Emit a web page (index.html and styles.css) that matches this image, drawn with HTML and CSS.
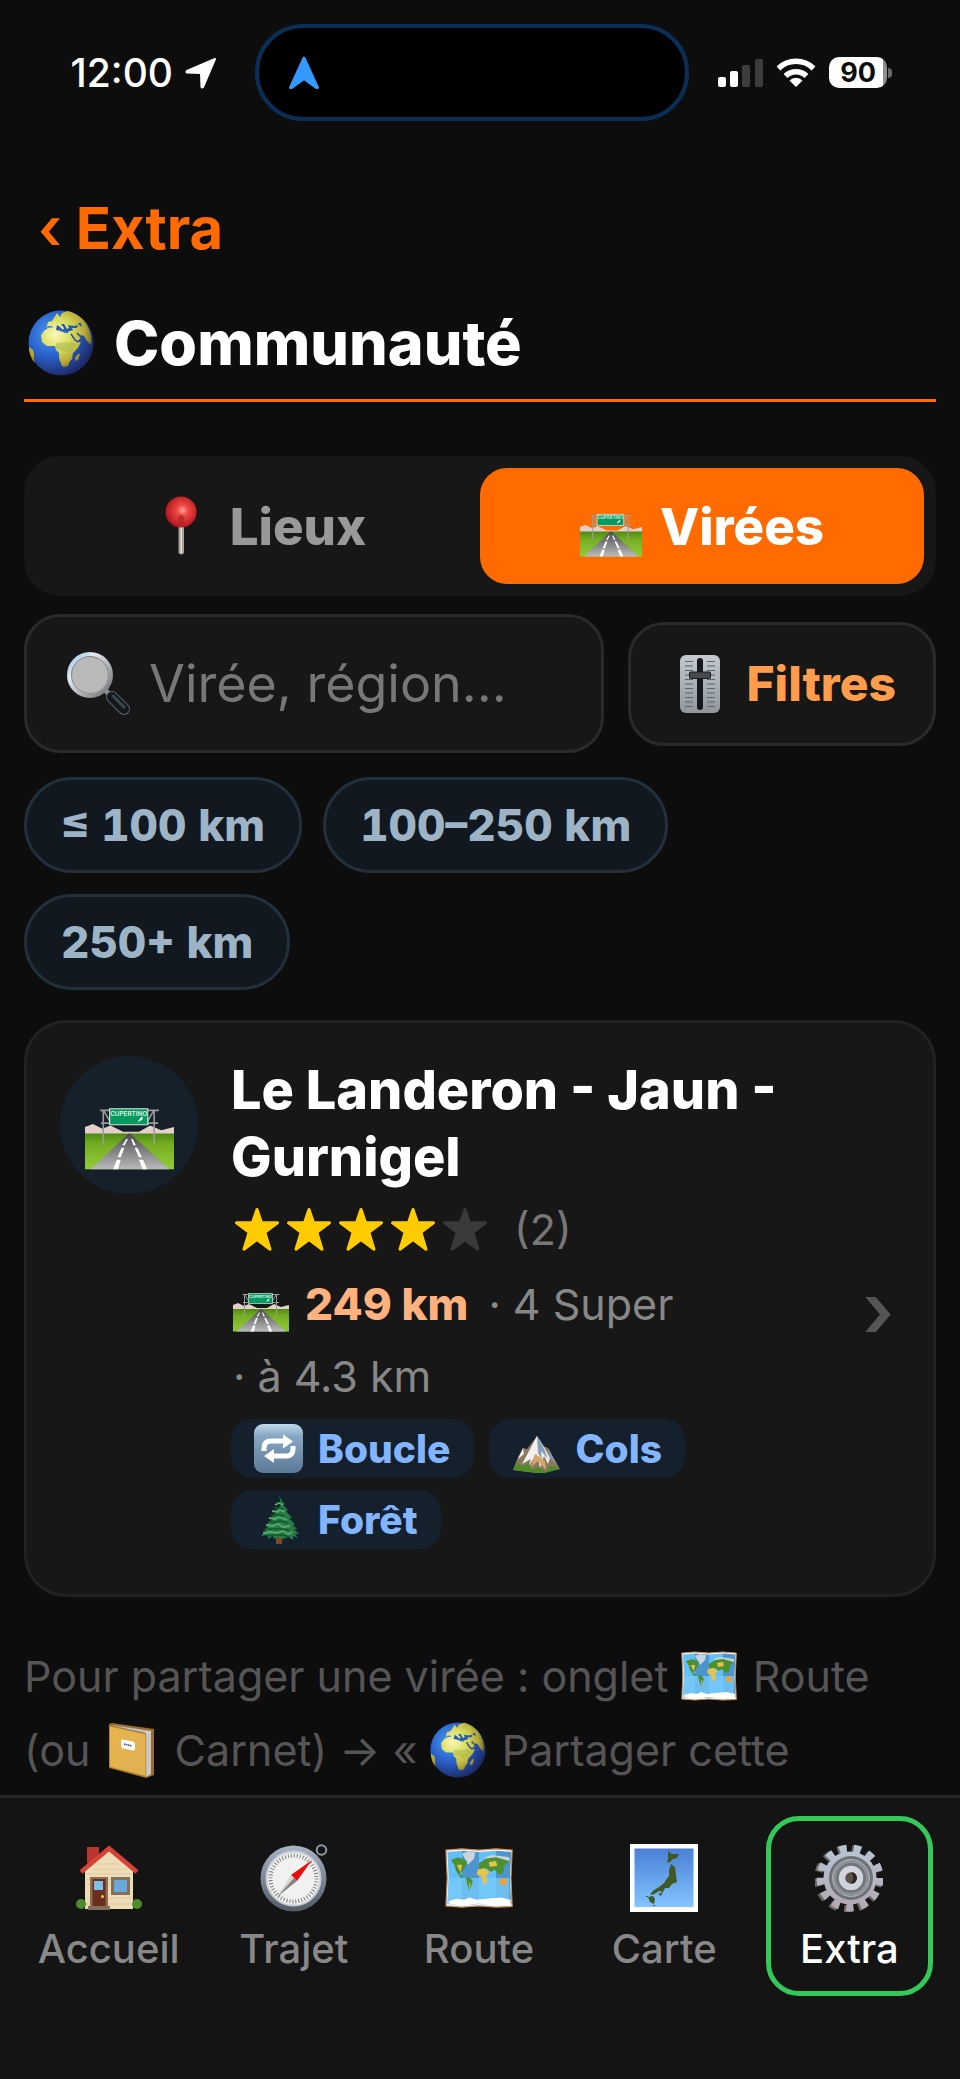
FILE: index.html
```html
<!DOCTYPE html>
<html lang="fr">
<head>
<meta charset="UTF-8">
<meta name="viewport" content="width=device-width, initial-scale=1">
<title>Communauté</title>
<link rel="stylesheet" href="styles.css">
</head>
<body>
<!-- shared icons -->
<svg class="sprite" aria-hidden="true">
<defs>
<radialGradient id="sea" cx="35%" cy="35%" r="70%">
<stop offset="0" stop-color="#4a9df0"/><stop offset=".5" stop-color="#2a62cc"/><stop offset="1" stop-color="#1c2763"/>
</radialGradient>
<radialGradient id="land" gradientUnits="userSpaceOnUse" cx="27" cy="24" r="40">
<stop offset="0" stop-color="#fbf8b4"/><stop offset=".4" stop-color="#d9dc62"/><stop offset=".75" stop-color="#b5a934"/><stop offset="1" stop-color="#5d5b18"/>
</radialGradient>
<linearGradient id="grass" x1="0" y1="0" x2="0" y2="1"><stop offset="0" stop-color="#4e8a12"/><stop offset=".3" stop-color="#74ad22"/><stop offset="1" stop-color="#93cc38"/></linearGradient>
<linearGradient id="asphalt" x1="0" y1="0" x2="0" y2="1"><stop offset="0" stop-color="#4b4b4d"/><stop offset="1" stop-color="#b9babb"/></linearGradient>
<radialGradient id="ball" cx="55%" cy="45%" r="55%"><stop offset="0" stop-color="#ffa79b"/><stop offset=".3" stop-color="#f14b45"/><stop offset="1" stop-color="#b3151d"/></radialGradient>
<linearGradient id="steel" x1="0" y1="0" x2="0" y2="1"><stop offset="0" stop-color="#c3cad0"/><stop offset="1" stop-color="#8f979d"/></linearGradient>
<linearGradient id="rim" x1="0" y1="0" x2="0" y2="1"><stop offset="0" stop-color="#a7b4c6"/><stop offset="1" stop-color="#525b67"/></linearGradient>
<linearGradient id="glass" x1="0" y1="0" x2="1" y2="1"><stop offset="0" stop-color="#8fc0f5"/><stop offset=".3" stop-color="#e4eaf0"/><stop offset="1" stop-color="#6a6a6c"/></linearGradient>
<linearGradient id="sky" x1="0" y1="0" x2="0" y2="1"><stop offset="0" stop-color="#4a80d6"/><stop offset="1" stop-color="#83c4ff"/></linearGradient>
<linearGradient id="key" x1="0" y1="0" x2="0" y2="1"><stop offset="0" stop-color="#c3d9ec"/><stop offset=".25" stop-color="#86a6c3"/><stop offset="1" stop-color="#5d7a98"/></linearGradient>
<linearGradient id="cover" x1="0" y1="0" x2="1" y2="1"><stop offset="0" stop-color="#e8b54a"/><stop offset="1" stop-color="#dfb055"/></linearGradient>
<linearGradient id="gearfill" x1="0" y1="0" x2="0" y2="1"><stop offset="0" stop-color="#b6c4d2"/><stop offset="1" stop-color="#b3a9b3"/></linearGradient>
</defs>
<symbol id="globe" viewBox="0 0 66 66">
<circle cx="33" cy="33" r="32.500" fill="url(#sea)"/>
<path fill="url(#land)" d="M13 25l3-4 4-3 7-1 4 1 1 3 5 2 7 0 2 5 2 4 5 0-3 6-5 5-1 6-2 2-2 5-4 1-2-1-3-8 0-5-3-3-1-4-8 0-5-4zM19 16l1-4 4-1 2-3 3-5 3 4 2-4 6-2c9 2 18 9 21 18 2 5 3 10 2 16l-4-4-3-5-3-1-1 4-5 4-3-2-4-9-5-1-4-2-3 1-4-4-4 0-2 2zM1 37l4 3 1 4 0 6 1 3c-4-4-6-10-6-16zM50 44l2 0-2 6-2 1-1-3z"/>
<path fill="#2557b5" d="M29 15l3 2 3 3 1-2-3-4 3 0 3 5 2-1-1-3 6 1 4-1-1 3-5 0 1 2-6 2-5-1-6-1zM50 13l3 0 1 4-3-2z"/>
<path stroke="#26489e" stroke-width="1.500" fill="none" d="M43 24l4 6 3 2M49 23l4 4"/>
<path fill="#9fb845" opacity=".5" d="M28 33l16-1 4 3-5 6-3 1-12-3z"/>
</symbol>
<symbol id="road" viewBox="0 0 56 56">
<path fill="#e5cfca" d="M0 29l5-2 6 3 5-2 8 4h10l7-4 7 3 8-2v6H0z"/>
<path fill="url(#grass)" d="M0 33h56v22.500H0z"/>
<path fill="url(#asphalt)" d="M27.500 33h1L53 55.500H3.500z"/>
<path fill="#fff" d="M26 36.500l1 0-2 4h-1.500zM23 42h1.800l-2.300 6h-2zM20 49.500h2.500l-1.800 6h-3zM29 36.500h1l2 4h-1.500zM31.200 42h1.700l3 6h-2zM34 49.500h2.500l2.700 6h-3z"/>
<path stroke="#9a9c9c" fill="none" d="M9.500 18.500h37M11.500 18v22M43.500 18v22M10 26.500h36M12 19l4 7M43 19l-4 7"/>
<path fill="#069a60" stroke="#d7e6dd" stroke-width=".7" d="M15.500 17.500h24v10h-24z"/>
<text x="27.500" y="22" font-size="4" text-anchor="middle" fill="#dff5e9" class="sign">CUPERTINO</text>
<path fill="#fff" d="M33 26l2-3 1.500-.3-.5 1.700z"/>
</symbol>
<symbol id="worldmap" viewBox="0 0 56 56">
<path fill="#fff" stroke="#c08a5a" d="M.8 5l13-1 14 1 14-1 13.500 1-1 23 1 23.500-13.500.5-14-1-14 1-13-1 1-23z"/>
<path fill="#63bff5" d="M2 6.500l12-1v45l-12-1 1-21zM28 6.500l14-1v45l-14-1z"/>
<path fill="#4b96cf" d="M14 5.500l14 1v43l-14 1zM42 5.500l12.500 1-1 21 1 22-12.500 1z"/>
<path fill="#78cbfa" d="M3 28h50v21l-11 1-14-1-14 1-12-1z" opacity=".75"/>
<path fill="#c9d3db" d="M14 8l5-2 6 1-1 5-5 5-2-4zM33 11l6-2 14 2v3H33z"/>
<path fill="#4c9130" d="M5 13l6-2 7 3-1 4-3 5-2 1 3 3-2 1-4-6-1-4zM17 27l4 1 2 3-3 7-2-6zM28 16l6-4 8-1 11 3-4 4-1 6-4 1-3-4-3 2-4-3-6 1z"/>
<path fill="#e6c34d" d="M10 17l4 0-1 6-2-3zM20 32l1 1-1 5zM27 21l5-1 5 3-3 3 1 5-3 3-2-7-4-2zM36 15l6-1 1 4-6 1zM45 30l4-1 2 4-5 0z"/>
<path fill="#f2a131" d="M45 29l4-1 2 3-1 3-5-1z"/>
<path fill="#fff" d="M3 47l7-2 6 1 4-2 6 2 8-1 12-1 8 2v4l-12 1-14-2-14 2-11-2z"/>
</symbol>
<symbol id="book" viewBox="0 0 56 56">
<path fill="#9a6c28" d="M6 2l3-1 42 6v46l-8 3L6 46z"/>
<path fill="#d9dbe0" d="M8 3l40 6v43l-5 3V11z"/>
<path stroke="#9c9ea6" stroke-width=".6" d="M45 11v42M47 10v42M12 3.500l34 6M9 4.500l34 6" fill="none"/>
<path fill="url(#cover)" stroke="#b27d28" stroke-width=".8" d="M6.500 4L43 12v42.500L6.500 45z"/>
<path fill="#fff" d="M20 17.500l10 2q2 .5 2 2.500v5q0 2-2 1.500l-10-2q-2-.5-2-2.500v-5q0-2 2-1.500z"/>
<path stroke="#555" stroke-width="1.600" stroke-dasharray="1.500 .5" d="M21 22l8 2"/>
</symbol>
<symbol id="pin" viewBox="0 0 62 62">
<path fill="#aaa09b" d="M28.500 29h5.500v29q-2.700 3-5.500 0z"/>
<path fill="#e4ddd8" d="M30.500 29h1.500v29h-1.500z"/>
<circle cx="31" cy="17" r="15.500" fill="url(#ball)"/>
<path fill="#b2252b" d="M28 22q3-5 6 0v10h-6z" opacity=".7"/>
</symbol>
<symbol id="slider" viewBox="0 0 58 58">
<rect x="9" y="0" width="40" height="58" rx="6" fill="url(#steel)"/>
<path stroke="#5d6468" stroke-width="1.200" d="M14 6.500h8M14 11h8M14 15.500h8M14 20h8M14 24.500h8M14 29h8M14 33.500h8M14 38h8M14 42.500h8M14 47h8M14 51.500h8M36 6.500h8M36 11h8M36 15.500h8M36 20h8M36 24.500h8M36 29h8M36 33.500h8M36 38h8M36 42.500h8M36 47h8M36 51.500h8"/>
<rect x="26" y="3" width="6" height="52" rx="3" fill="#15181d"/>
<rect x="18.500" y="17" width="21" height="6.500" rx="1" fill="#454a4e" stroke="#1a1c1e"/>
</symbol>
<symbol id="magnifier" viewBox="0 0 64 64">
<path stroke="#8d939a" stroke-width="5" d="M38 38l6 6"/>
<path stroke="#5b636b" stroke-width="12" stroke-linecap="round" d="M45 45l12 12"/>
<path stroke="#14181c" stroke-width="10" stroke-linecap="round" d="M45 45l12 12"/>
<path stroke="#3d464e" stroke-width="3" stroke-linecap="round" d="M46 44l11 11"/>
<circle cx="23" cy="23" r="21" fill="#b9b9b9" stroke="url(#glass)" stroke-width="4"/>
<circle cx="23" cy="23" r="18.500" fill="none" stroke="#8a8a8c"/>
</symbol>
<symbol id="loop" viewBox="0 0 49 49">
<rect width="49" height="49" rx="9" fill="url(#key)"/>
<path fill="none" stroke="#fff" stroke-width="5" d="M10 27v-3q0-7 7-7h14M39 22v3q0 7-7 7H18"/>
<path fill="#fff" d="M29 10.500l10 7-10 7zM20 25l-10 7 10 7z"/>
</symbol>
<symbol id="mountain" viewBox="0 0 49 49">
<path fill="#8b7860" d="M1 46l5-13 5-9 4 1L25 12l6 10 5 2 6 11 6 10-15 3-8 1z"/>
<path fill="#f1f0ec" d="M25 12l-8 15-7 13 9-5-3 9 8-14 2 4 2 10 4-12 4 8 2-6-7-13zM11 24l-5 11 6-5z"/>
<path fill="#869eb8" d="M25 12l6 10 5 13-7-8 1 8-4-6zM36 24l6 11 3 5-7-6z"/>
<path fill="#d6a66a" d="M23 30l-4 13 7-6 8 9-1-9-5-4z"/>
<path fill="#4e8b27" d="M1 46l4-7 6 3 6-3 2 7 7-3 8 5 4-7 10 4-15 4-9 0z"/>
</symbol>
<symbol id="tree" viewBox="0 0 49 49">
<path fill="#7b4b2b" d="M22 41h6v8h-6z"/>
<path fill="#277a46" d="M25 0l3 6 3 3-2 1 5 5-2 1 6 7-3 0 6 6-2 1 4 4-3 0 5 5-4 0 3 4-5-2 0 4-5-3-5 2-4-2-5 2-1-3-5 3 0-4-7 1 5-5-2-1 6-5-3-1 6-5-2-1 6-6-2-1 6-6z"/>
<path stroke="#52ad68" stroke-width="1.800" fill="none" d="M21 10l4-2 4 2M18 16l5 1 3-2 5 2M15 23l6 1 4-2 8 3M12 30l7 1 5-2 5 3 7-1M9 38l8-1 6 1 6-2 5 3 5-2"/>
<path stroke="#145631" stroke-width="1.400" fill="none" d="M20 13l5 0 4 1M17 20l6 0 7 1M14 27l7 0 6-1 7 2M11 34l8 0 7 0 9 1M13 41l8-1 7 0 8 2"/>
</symbol>
<symbol id="house" viewBox="0 0 68 68">
<path fill="#b8362d" d="M12 3h12v16H12z"/>
<path fill="#eeddb6" d="M10 65V26L34 5l24 21v39z"/>
<path stroke="#d9c69c" stroke-width=".8" d="M22 20h24M17 25h35M11 30h46M11 35h46M11 40h46M11 54h46M11 60h46"/>
<path fill="#2b2624" d="M34 1l29 25-3 1L34 5z"/>
<path fill="none" stroke="#d64138" stroke-width="4.500" d="M6 28L34 4.500 62 28"/>
<path fill="#8a6f52" d="M15 33h18v30H15z"/>
<path fill="#6b2d1c" d="M17.500 35h13v28h-13z"/>
<path fill="#7fc0ea" d="M19 37h9v9h-9z"/>
<circle cx="27.500" cy="52.500" r="1.500" fill="#f2c84b"/>
<path fill="#81705a" d="M36 33h19v18H36zM13 62h22v4H13z"/>
<path fill="#69a9da" d="M39 36h13v12H39z"/>
<circle cx="6" cy="60" r="5" fill="#4f8a2c"/><circle cx="62" cy="60" r="5" fill="#4f8a2c"/>
</symbol>
<symbol id="compass" viewBox="0 0 68 68">
<circle cx="61.500" cy="6" r="4.800" fill="none" stroke="#8f9aa9" stroke-width="2"/>
<circle cx="33.500" cy="34.500" r="33" fill="url(#rim)"/>
<circle cx="33.500" cy="34.500" r="27" fill="#f1f1f1" stroke="#c9cdd1" stroke-width="2"/>
<circle cx="33.500" cy="34.500" r="23" fill="none" stroke="#808080" stroke-width="4" stroke-dasharray="1 2"/>
<path fill="#e8100f" d="M52 16L31 31l6 6z"/>
<path fill="#d5d5d3" d="M17 53l14-22 3 3z"/>
<path fill="#86837e" d="M17 53l20-16-3-3z"/>
</symbol>
<symbol id="japan" viewBox="0 0 68 68">
<path fill="#fff" d="M0 0h68v68H0z"/>
<path fill="url(#sky)" d="M4.500 4.500h59v58.500h-59z"/>
<path fill="#3f5a26" d="M38 7l4 3 7 0-2 4-4 1-3 3-3 1 1-5zM41 20l4 3 1 8 1 7-5 2-3 4-4 0-2 4-4-1-3 2-4 2-2-1 4-4 5-3 5-4 2-3 3-4 0-6zM28 50l5-2-2 4zM18 53l5-1 2 3-1 5-4-2z"/>
<path fill="#3f5a26" d="M16 52h2v1h-2zM23 61h2v1h-2z"/>
</symbol>
<symbol id="gear" viewBox="0 0 68 68">
<circle cx="33" cy="35" r="30" fill="none" stroke="#6c6660" stroke-width="8" stroke-dasharray="7.500 7"/>
<circle cx="35" cy="34" r="29.500" fill="none" stroke="url(#gearfill)" stroke-width="8" stroke-dasharray="7.300 6.950"/>
<circle cx="35" cy="34" r="26.500" fill="url(#gearfill)"/>
<circle cx="36" cy="34" r="22" fill="#6d7276"/>
<circle cx="36" cy="34" r="18.500" fill="#8d9196" stroke="#b0b4b9"/>
<circle cx="36" cy="34" r="15" fill="#70757a"/>
<circle cx="36" cy="34" r="9" fill="#5b5148" stroke="#d0d4dc" stroke-width="6.500"/>
<path fill="#2a2623" d="M36 28a6 6 0 0 1 0 12 9 9 0 0 0 0-12z"/>
</symbol>
<symbol id="star" viewBox="0 0 46 46">
<path fill="currentColor" stroke="currentColor" stroke-width="3" stroke-linejoin="round" d="M23 3.500l4.500 13.200 16 .1-12.700 9.400 5.200 17L23 33.500l-13 9.700 5.200-17L2.500 16.800l16-.1z"/>
</symbol>
</svg>

<header class="status-bar">
<div class="status-time">12:00
<svg width="32" height="32" viewBox="0 0 32 32"><path fill="#fff" stroke="#fff" stroke-width="2" stroke-linejoin="round" d="M30 2L18 30q-1 1-1.500 0L16 16 2 15.500q-1-.5 0-1.500z"/></svg>
</div>
<div class="island">
<svg width="34" height="36" viewBox="0 0 34 36"><path fill="#3399ff" stroke="#3399ff" stroke-width="3" stroke-linejoin="round" d="M17 3l13.500 29.500h-1L17 23.500 4.500 32.500h-1z"/></svg>
</div>
<div class="status-icons">
<svg width="45" height="30" viewBox="0 0 45 30"><rect y="19" width="8" height="10" rx="2" fill="#fff"/><rect x="12" y="13" width="8" height="16" rx="2" fill="#fff"/><rect x="24" y="7" width="8" height="22" rx="2" fill="#3c3c3c"/><rect x="37" y="1" width="8" height="28" rx="2" fill="#3c3c3c"/></svg>
<svg width="40" height="30" viewBox="0 0 40 30"><path fill="none" stroke="#fff" stroke-width="5.500" d="M2.500 10.500a25 25 0 0 1 35 0M9.500 18a15 15 0 0 1 21 0"/><path fill="#fff" d="M20 29l-6.500-6.500a9 9 0 0 1 13 0z"/></svg>
<div class="battery"><span class="level">90</span><span class="cap"></span></div>
</div>
</header>

<main class="page">
<a class="back" href="#"><span>‹</span> Extra</a>
<h1 class="title"><svg class="title-icon"><use href="#globe"/></svg>Communauté</h1>

<div class="tabs">
<button class="tab" type="button"><svg class="tab-icon"><use href="#pin"/></svg>Lieux</button>
<button class="tab active" type="button"><svg class="tab-icon"><use href="#road"/></svg>Virées</button>
</div>

<div class="search-row">
<label class="search">
<svg class="search-icon" role="img" aria-label="Rechercher"><use href="#magnifier"/></svg>
<input type="text" placeholder="Virée, région...">
</label>
<button class="filters" type="button"><svg class="filter-icon"><use href="#slider"/></svg>Filtres</button>
</div>

<div class="chips">
<button class="chip" type="button">≤ 100 km</button>
<button class="chip" type="button">100–250 km</button>
<button class="chip" type="button">250+ km</button>
</div>

<a class="card" href="#">
<div class="avatar"><svg class="avatar-icon"><use href="#road"/></svg></div>
<div class="card-body">
<h2>Le Landeron - Jaun - Gurnigel</h2>
<div class="rating">
<svg class="star"><use href="#star"/></svg>
<svg class="star"><use href="#star"/></svg>
<svg class="star"><use href="#star"/></svg>
<svg class="star"><use href="#star"/></svg>
<svg class="star off"><use href="#star"/></svg>
<span class="count">(2)</span>
</div>
<div class="meta">
<span><svg class="emoji"><use href="#road"/></svg> <b>249 km</b></span>
<span>· 4 Super</span>
<span>· à 4.3 km</span>
</div>
<div class="tags">
<span class="tag"><svg class="tag-icon"><use href="#loop"/></svg>Boucle</span>
<span class="tag"><svg class="tag-icon"><use href="#mountain"/></svg>Cols</span>
<span class="tag"><svg class="tag-icon"><use href="#tree"/></svg>Forêt</span>
</div>
</div>
<span class="chevron">›</span>
</a>

<p class="hint">Pour partager une virée : onglet <svg class="emoji"><use href="#worldmap"/></svg> Route (ou <svg class="emoji"><use href="#book"/></svg> Carnet) → « <svg class="emoji"><use href="#globe"/></svg> Partager cette</p>
</main>

<nav class="tabbar">
<a class="nav-item" href="#"><svg class="nav-icon"><use href="#house"/></svg>Accueil</a>
<a class="nav-item" href="#"><svg class="nav-icon"><use href="#compass"/></svg>Trajet</a>
<a class="nav-item" href="#"><svg class="nav-icon"><use href="#worldmap"/></svg>Route</a>
<a class="nav-item" href="#"><svg class="nav-icon"><use href="#japan"/></svg>Carte</a>
<a class="nav-item active" href="#"><svg class="nav-icon"><use href="#gear"/></svg>Extra</a>
</nav>
</body>
</html>
```

FILE: styles.css
```css
* {
box-sizing: border-box;
}
body {
margin: 0;
min-height: 100vh;
display: flex;
flex-direction: column;
background: #0d0d0d;
color: #fff;
font-family: Inter, "Liberation Sans", sans-serif;
}
button, input {
font-family: inherit;
}
button {
cursor: pointer;
}
a {
text-decoration: none;
}
svg {
flex-shrink: 0;
}
.sprite {
position: absolute;
width: 0;
height: 0;
}
.sign {
font-family: Inter, sans-serif;
font-weight: 600;
}

/* status bar */
.status-bar {
display: grid;
grid-template-columns: 1fr 434px 1fr;
align-items: center;
padding: 24px 16px 0 0;
}
.status-time {
display: flex;
align-items: center;
justify-content: flex-end;
gap: 12px;
padding-right: 38px;
font-size: 39px;
font-weight: 500;
}
.island {
display: flex;
align-items: center;
height: 97px;
padding-left: 28px;
border: 4px solid #0a2f57;
border-radius: 48px;
background: #000;
}
.status-icons {
display: flex;
align-items: center;
gap: 13px;
padding-left: 29px;
}
.battery {
display: flex;
align-items: center;
gap: 1px;
}
.level {
width: 58px;
height: 31px;
border-radius: 10px;
background: linear-gradient(90deg, #fff 54px, #8e8e8e 54px);
color: #0d0d0d;
font-size: 27px;
font-weight: 700;
line-height: 31px;
text-align: center;
}
.cap {
width: 4px;
height: 10px;
border-radius: 0 4px 4px 0;
background: #6a6a6a;
}

/* page */
.page {
flex: 1;
padding: 69px 24px 0;
}
.back {
display: inline-block;
padding-left: 14px;
color: #ff6b00;
font-size: 58px;
font-weight: 700;
line-height: 76px;
}
.back span {
font-weight: 600;
}
.title {
display: flex;
align-items: center;
gap: 20px;
margin: 34px 0 54px;
padding: 0 4px 13px;
border-bottom: 3px solid #ff6b00;
font-size: 61px;
font-weight: 800;
line-height: 86px;
}
.title-icon {
width: 66px;
height: 66px;
}

.tabs {
display: flex;
padding: 12px;
margin-bottom: 18px;
border-radius: 36px;
background: #171717;
}
.tab {
flex: 1;
display: flex;
align-items: center;
justify-content: center;
gap: 18px;
height: 116px;
padding: 0;
border: 0;
border-radius: 27px;
background: none;
color: #999;
font-size: 51px;
font-weight: 800;
}
.tab.active {
background: #ff6b00;
color: #fff;
}
.tab-icon {
width: 62px;
height: 62px;
}

.search-row {
display: flex;
align-items: center;
gap: 24px;
margin-bottom: 24px;
}
.search {
flex: 1;
display: flex;
align-items: center;
gap: 18px;
min-width: 0;
height: 139px;
padding: 0 40px;
border: 3px solid #2a2a2a;
border-radius: 36px;
background: #171717;
}
.search-icon {
width: 64px;
height: 64px;
}
.search input {
width: 100%;
min-width: 0;
padding: 0;
border: 0;
outline: 0;
background: none;
color: #fff;
font-size: 52px;
}
.search input::placeholder {
color: #777;
}
.filters {
display: flex;
align-items: center;
gap: 18px;
height: 124px;
padding: 0 37px 0 40px;
border: 3px solid #2a2a2a;
border-radius: 36px;
background: #171717;
color: #ff9d4d;
font-size: 48px;
font-weight: 800;
}
.filter-icon {
width: 58px;
height: 58px;
}

.chips {
display: flex;
flex-wrap: wrap;
gap: 21px;
padding-right: 120px;
margin-bottom: 30px;
}
.chip {
height: 96px;
padding: 0 34px;
border: 3px solid #22303c;
border-radius: 48px;
background: #11181f;
color: #9db4c6;
font-size: 44px;
font-weight: 800;
font-variant-numeric: tabular-nums;
}

/* ride card */
.card {
display: flex;
gap: 33px;
padding: 33px 39px 33px 33px;
border: 3px solid #222;
border-radius: 42px;
background: #171717;
color: #888;
}
.avatar {
display: flex;
align-items: center;
justify-content: center;
flex-shrink: 0;
width: 138px;
height: 138px;
border-radius: 50%;
background: #15202b;
}
.avatar-icon {
width: 89px;
height: 89px;
}
.card-body {
flex: 1;
min-width: 0;
padding-bottom: 12px;
}
.card h2 {
margin: 0;
color: #fff;
font-size: 54px;
font-weight: 800;
line-height: 67px;
}
.rating {
display: flex;
align-items: center;
gap: 6px;
height: 78px;
padding-left: 3px;
}
.star {
width: 46px;
height: 46px;
color: #ffcc00;
}
.star.off {
color: #3a3a3a;
}
.count {
padding-left: 20px;
color: #777;
font-size: 43px;
}
.meta {
display: flex;
flex-wrap: wrap;
column-gap: 20px;
padding-left: 2px;
font-size: 43px;
line-height: 72px;
}
.meta b {
color: #ffb27d;
font-size: 44px;
font-weight: 800;
}
.emoji {
width: 56px;
height: 56px;
margin-right: 4px;
vertical-align: -12px;
}
.tags {
display: flex;
flex-wrap: wrap;
gap: 12px 15px;
margin-top: 7px;
}
.tag {
display: flex;
align-items: center;
gap: 15px;
height: 59px;
padding: 0 23px;
border-radius: 21px;
background: #14202c;
color: #82b4ff;
font-size: 39px;
font-weight: 800;
}
.tag-icon {
width: 49px;
height: 49px;
}
.chevron {
align-self: center;
color: #555;
font-size: 76px;
font-weight: 600;
}

.hint {
margin: 42px 0 0;
color: #555;
font-size: 43px;
line-height: 74px;
}

/* bottom navigation */
.tabbar {
position: sticky;
bottom: 0;
display: flex;
gap: 18px;
height: 284px;
padding: 18px 27px 0 25px;
border-top: 3px solid #262626;
background: #141414;
}
.nav-item {
flex: 1;
display: flex;
flex-direction: column;
align-items: center;
gap: 13px;
height: 180px;
padding-top: 23px;
border: 5px solid transparent;
border-radius: 33px;
color: #888;
font-size: 40px;
font-weight: 500;
line-height: 48px;
}
.nav-item.active {
border-color: #34c759;
color: #fff;
}
.nav-icon {
width: 68px;
height: 68px;
}
```
